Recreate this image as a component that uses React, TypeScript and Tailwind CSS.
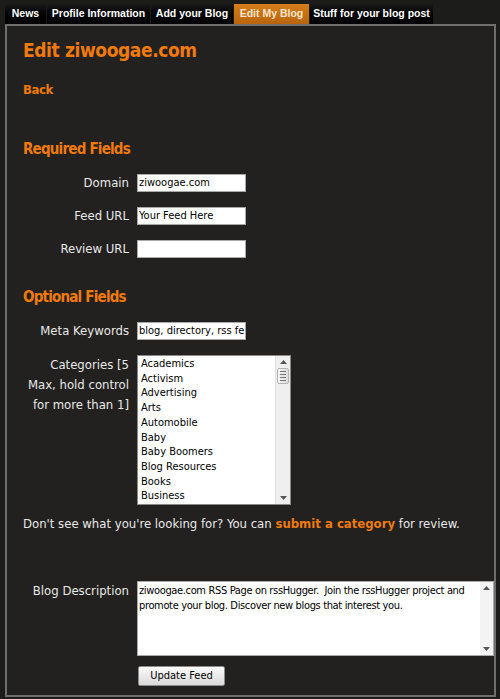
const font = "font-['DejaVu_Sans_Condensed','DejaVu_Sans',sans-serif]";

const categories = [
  "Academics",
  "Activism",
  "Advertising",
  "Arts",
  "Automobile",
  "Baby",
  "Baby Boomers",
  "Blog Resources",
  "Books",
  "Business",
];

function Tab({ label, w, active }: { label: string; w: string; active?: boolean }) {
  return (
    <div
      className={
        active
          ? `${w} h-[20px] flex items-center justify-center whitespace-nowrap font-['Liberation_Sans',sans-serif] text-[10.5px] font-bold text-[#f6e6cf] bg-gradient-to-b from-[#d57e1a] to-[#b8640a]`
          : `${w} h-[20px] flex items-center justify-center whitespace-nowrap font-['Liberation_Sans',sans-serif] text-[10.5px] font-bold text-white bg-gradient-to-b from-[#1a1a1a] to-[#000000]`
      }
    >
      {label}
    </div>
  );
}

function Row({ label, children, className }: { label: React.ReactNode; children: React.ReactNode; className?: string }) {
  return (
    <div className={`flex gap-2 ${className ?? ""}`}>
      <div className="w-[106px] shrink-0 text-right text-[13px] leading-[20px] text-[#e8e8e8]">{label}</div>
      {children}
    </div>
  );
}

function TextBox({ value }: { value: string }) {
  return (
    <div className="w-[109px] h-[18px] bg-white border border-[#a9a9a9] px-[1px] text-[11px] leading-[16px] text-black overflow-hidden whitespace-nowrap">
      {value}
    </div>
  );
}

function Arrow({ up }: { up?: boolean }) {
  return (
    <div className="h-[12px] flex items-center justify-center">
      <svg width="7" height="4" viewBox="0 0 7 4">
        {up ? <path d="M0 4 L3.5 0 L7 4 Z" fill="#555" /> : <path d="M0 0 L3.5 4 L7 0 Z" fill="#555" />}
      </svg>
    </div>
  );
}

export default function App() {
  return (
    <div className={`${font} bg-[#1c1c1b] w-[500px] h-[699px] pt-[4px] overflow-hidden`}>
      <div className="flex gap-[1px] pl-[5px]">
        <Tab label="News" w="w-[41px]" />
        <Tab label="Profile Information" w="w-[103px]" />
        <Tab label="Add your Blog" w="w-[82px]" />
        <Tab label="Edit My Blog" w="w-[75px]" active />
        <Tab label="Stuff for your blog post" w="w-[123px]" />
      </div>
      <div className="ml-[5px] w-[491px] h-[673px] border-2 border-[#6e6e6e] bg-[#22211f] pl-[16px] flex flex-col">
        <h1 className="mt-[12px] text-[19px] leading-[24px] tracking-[-0.4px] font-bold text-[#f07a0c]">Edit ziwoogae.com</h1>
        <div className="mt-[20px] text-[13px] leading-[16px] tracking-[-0.4px] font-bold text-[#f07a0c]">Back</div>
        <h2 className="mt-[42px] text-[15px] leading-[18px] tracking-[-0.8px] font-bold text-[#f07a0c]">Required Fields</h2>

        <Row label="Domain" className="mt-[16px] items-center h-[18px]">
          <TextBox value="ziwoogae.com" />
        </Row>
        <Row label="Feed URL" className="mt-[15px] items-center h-[18px]">
          <TextBox value="Your Feed Here" />
        </Row>
        <Row label="Review URL" className="mt-[15px] items-center h-[18px]">
          <TextBox value="" />
        </Row>

        <h2 className="mt-[30px] text-[15px] leading-[18px] tracking-[-0.8px] font-bold text-[#f07a0c]">Optional Fields</h2>

        <Row label="Meta Keywords" className="mt-[16px] items-center h-[18px]">
          <TextBox value="blog, directory, rss fe" />
        </Row>

        <Row label={<>Categories [5<br />Max, hold control<br />for more than 1]</>} className="mt-[15px]">
          <div className="w-[154px] h-[150px] bg-white border border-[#8a8a8a] flex">
            <div className="flex-1 pl-[3px] pt-[1px] text-[11px] leading-[14.7px] text-black">
              {categories.map((c) => (
                <div key={c}>{c}</div>
              ))}
            </div>
            <div className="w-[15px] bg-[#efefef] border-l border-[#e2e2e2] flex flex-col">
              <Arrow up />
              <div className="mx-[1px] h-[16px] bg-gradient-to-r from-[#f4f4f4] to-[#dcdcdc] border border-[#b4b4b4] rounded-[2px] flex flex-col items-center justify-center gap-[2px]">
                <div className="w-[6px] h-[1px] bg-[#777]" />
                <div className="w-[6px] h-[1px] bg-[#777]" />
                <div className="w-[6px] h-[1px] bg-[#777]" />
                <div className="w-[6px] h-[1px] bg-[#777]" />
              </div>
              <div className="flex-1" />
              <Arrow />
            </div>
          </div>
        </Row>

        <p className="mt-[11px] text-[13px] leading-[16px] text-[#e8e8e8]">
          Don't see what you're looking for? You can{" "}
          <span className="font-bold text-[#f07a0c]">submit a category</span> for review.
        </p>

        <Row label="Blog Description" className="mt-[49px]">
          <div className="w-[359px] h-[75px] bg-white border border-[#a9a9a9] flex">
            <div className="flex-1 pl-[1px] pt-[1px] text-[11px] leading-[15px] tracking-[-0.35px] text-black">
              ziwoogae.com RSS Page on rssHugger.&nbsp; Join the rssHugger project and promote your blog. Discover new blogs that interest you.
            </div>
            <div className="w-[13px] bg-[#f3f3f3] flex flex-col justify-between">
              <Arrow up />
              <Arrow />
            </div>
          </div>
        </Row>

        <div className="mt-[10px] ml-[115px]">
          <div className="w-[87px] h-[20px] rounded-[2px] border border-[#8c8c8c] bg-gradient-to-b from-[#fbfbfb] to-[#d9d9d9] flex items-center justify-center text-[11px] text-black">
            Update Feed
          </div>
        </div>
      </div>
    </div>
  );
}
